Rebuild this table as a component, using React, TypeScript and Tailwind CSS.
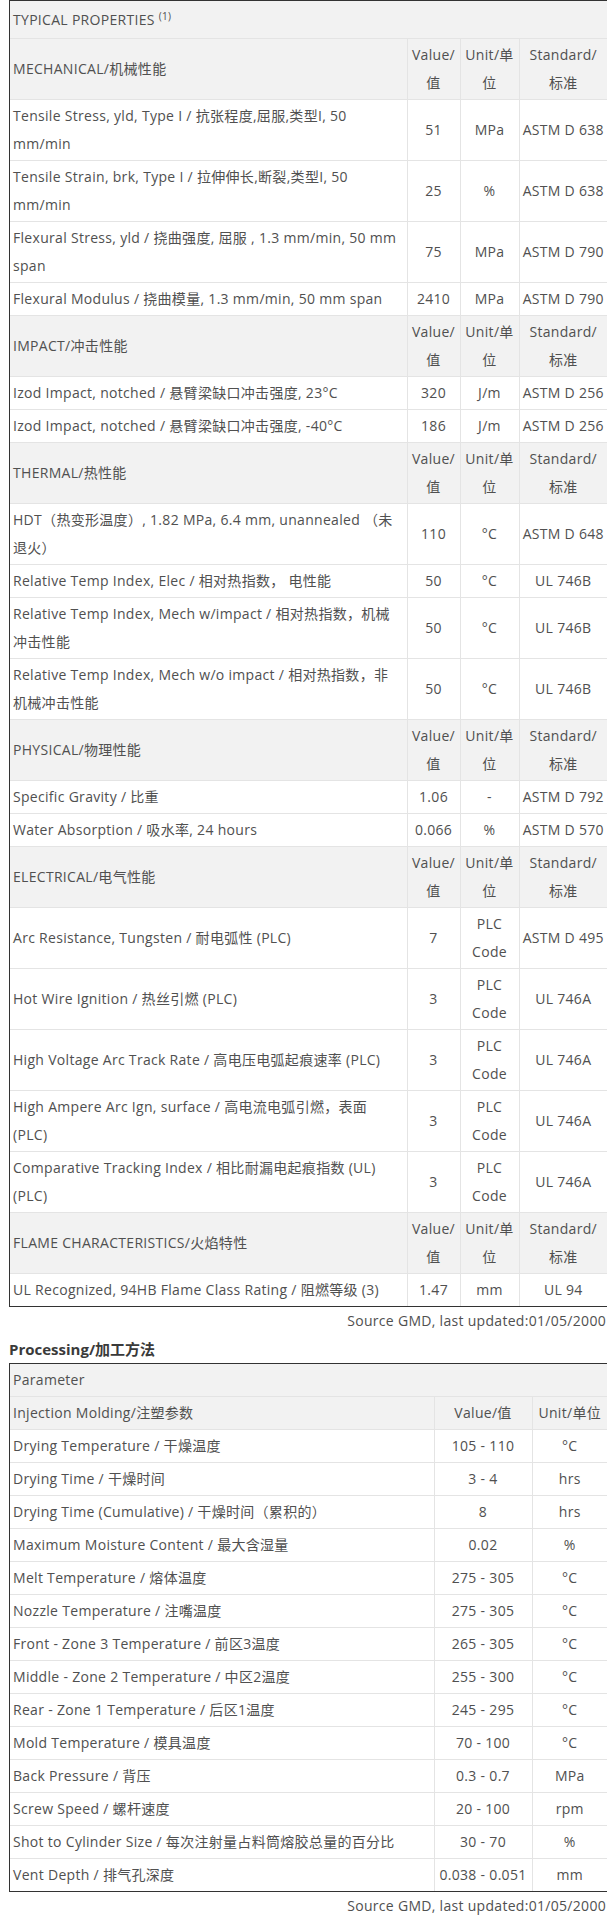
import React from "react";

type Row = { name: React.ReactNode; value: string; unit: React.ReactNode; std: string };
type Section = { title: string; rows: Row[] };

const plc = (
  <>
    PLC
    <br />
    Code
  </>
);

const sections: Section[] = [
  {
    title: "MECHANICAL/机械性能",
    rows: [
      { name: <>Tensile Stress, yld, Type I / 抗张程度,屈服,类型I, 50<br />mm/min</>, value: "51", unit: "MPa", std: "ASTM D 638" },
      { name: <>Tensile Strain, brk, Type I / 拉伸伸长,断裂,类型I, 50<br />mm/min</>, value: "25", unit: "%", std: "ASTM D 638" },
      { name: <>Flexural Stress, yld / 挠曲强度, 屈服 , 1.3 mm/min, 50 mm<br />span</>, value: "75", unit: "MPa", std: "ASTM D 790" },
      { name: "Flexural Modulus / 挠曲模量, 1.3 mm/min, 50 mm span", value: "2410", unit: "MPa", std: "ASTM D 790" },
    ],
  },
  {
    title: "IMPACT/冲击性能",
    rows: [
      { name: "Izod Impact, notched / 悬臂梁缺口冲击强度, 23°C", value: "320", unit: "J/m", std: "ASTM D 256" },
      { name: "Izod Impact, notched / 悬臂梁缺口冲击强度, -40°C", value: "186", unit: "J/m", std: "ASTM D 256" },
    ],
  },
  {
    title: "THERMAL/热性能",
    rows: [
      { name: <>HDT（热变形温度）, 1.82 MPa, 6.4 mm, unannealed （未<br />退火）</>, value: "110", unit: "°C", std: "ASTM D 648" },
      { name: "Relative Temp Index, Elec / 相对热指数， 电性能", value: "50", unit: "°C", std: "UL 746B" },
      { name: <>Relative Temp Index, Mech w/impact / 相对热指数，机械<br />冲击性能</>, value: "50", unit: "°C", std: "UL 746B" },
      { name: <>Relative Temp Index, Mech w/o impact / 相对热指数，非<br />机械冲击性能</>, value: "50", unit: "°C", std: "UL 746B" },
    ],
  },
  {
    title: "PHYSICAL/物理性能",
    rows: [
      { name: "Specific Gravity / 比重", value: "1.06", unit: "-", std: "ASTM D 792" },
      { name: "Water Absorption / 吸水率, 24 hours", value: "0.066", unit: "%", std: "ASTM D 570" },
    ],
  },
  {
    title: "ELECTRICAL/电气性能",
    rows: [
      { name: "Arc Resistance, Tungsten / 耐电弧性 (PLC)", value: "7", unit: plc, std: "ASTM D 495" },
      { name: "Hot Wire Ignition / 热丝引燃 (PLC)", value: "3", unit: plc, std: "UL 746A" },
      { name: "High Voltage Arc Track Rate / 高电压电弧起痕速率 (PLC)", value: "3", unit: plc, std: "UL 746A" },
      { name: <>High Ampere Arc Ign, surface / 高电流电弧引燃，表面<br />(PLC)</>, value: "3", unit: plc, std: "UL 746A" },
      { name: <>Comparative Tracking Index / 相比耐漏电起痕指数 (UL)<br />(PLC)</>, value: "3", unit: plc, std: "UL 746A" },
    ],
  },
  {
    title: "FLAME CHARACTERISTICS/火焰特性",
    rows: [
      { name: "UL Recognized, 94HB Flame Class Rating / 阻燃等级 (3)", value: "1.47", unit: "mm", std: "UL 94" },
    ],
  },
];

const processing: [string, string, string][] = [
  ["Drying Temperature / 干燥温度", "105 - 110", "°C"],
  ["Drying Time / 干燥时间", "3 - 4", "hrs"],
  ["Drying Time (Cumulative) / 干燥时间（累积的）", "8", "hrs"],
  ["Maximum Moisture Content / 最大含湿量", "0.02", "%"],
  ["Melt Temperature / 熔体温度", "275 - 305", "°C"],
  ["Nozzle Temperature / 注嘴温度", "275 - 305", "°C"],
  ["Front - Zone 3 Temperature / 前区3温度", "265 - 305", "°C"],
  ["Middle - Zone 2 Temperature / 中区2温度", "255 - 300", "°C"],
  ["Rear - Zone 1 Temperature / 后区1温度", "245 - 295", "°C"],
  ["Mold Temperature / 模具温度", "70 - 100", "°C"],
  ["Back Pressure / 背压", "0.3 - 0.7", "MPa"],
  ["Screw Speed / 螺杆速度", "20 - 100", "rpm"],
  ["Shot to Cylinder Size / 每次注射量占料筒熔胶总量的百分比", "30 - 70", "%"],
  ["Vent Depth / 排气孔深度", "0.038 - 0.051", "mm"],
];

const td = "border border-[#e4e4e4] px-[3px] py-[2px] leading-[28px] align-middle";
const tdc = td + " text-center";

export default function App() {
  return (
    <div className="w-[607px] overflow-hidden bg-white text-[14px] tracking-[0.3px] text-[#505050] font-['Open_Sans','Noto_Sans_CJK_SC',sans-serif]">
      <div className="ml-[9px] w-[599px]">
        <div className="border border-[#333]">
          <table className="w-full table-fixed border-collapse border-hidden">
            <colgroup>
              <col className="w-[397px]" />
              <col className="w-[53px]" />
              <col className="w-[59px]" />
              <col className="w-[88px]" />
            </colgroup>
            <tbody>
              <tr className="bg-[#f2f2f2]">
                <td colSpan={4} className="border border-[#e4e4e4] px-[3px] pt-[5px] pb-[4px] leading-[28px]">
                  TYPICAL PROPERTIES <sup className="text-[10px]">(1)</sup>
                </td>
              </tr>
              {sections.map((s) => (
                <React.Fragment key={s.title}>
                  <tr className="bg-[#f2f2f2]">
                    <td className={td}>{s.title}</td>
                    <td className={tdc}>Value/<br />值</td>
                    <td className={tdc}>Unit/单<br />位</td>
                    <td className={tdc}>Standard/<br />标准</td>
                  </tr>
                  {s.rows.map((r, i) => (
                    <tr key={i}>
                      <td className={td}>{r.name}</td>
                      <td className={tdc}>{r.value}</td>
                      <td className={tdc}>{r.unit}</td>
                      <td className={tdc}>{r.std}</td>
                    </tr>
                  ))}
                </React.Fragment>
              ))}
            </tbody>
          </table>
        </div>
        <p className="pr-[2px] text-right leading-[28px]">Source GMD, last updated:01/05/2000</p>
        <h3 className="text-[15px] font-bold leading-[28px] tracking-normal text-[#3a3a3a]">Processing/加工方法</h3>
        <div className="border border-[#333]">
          <table className="w-full table-fixed border-collapse border-hidden">
            <colgroup>
              <col className="w-[424px]" />
              <col className="w-[98px]" />
              <col className="w-[75px]" />
            </colgroup>
            <tbody>
              <tr className="bg-[#f2f2f2]">
                <td colSpan={3} className={td}>Parameter</td>
              </tr>
              <tr className="bg-[#f2f2f2]">
                <td className={td}>Injection Molding/注塑参数</td>
                <td className={tdc}>Value/值</td>
                <td className={tdc}>Unit/单位</td>
              </tr>
              {processing.map(([n, v, u]) => (
                <tr key={n}>
                  <td className={td}>{n}</td>
                  <td className={tdc}>{v}</td>
                  <td className={tdc}>{u}</td>
                </tr>
              ))}
            </tbody>
          </table>
        </div>
        <p className="pr-[2px] text-right leading-[28px]">Source GMD, last updated:01/05/2000</p>
      </div>
    </div>
  );
}
